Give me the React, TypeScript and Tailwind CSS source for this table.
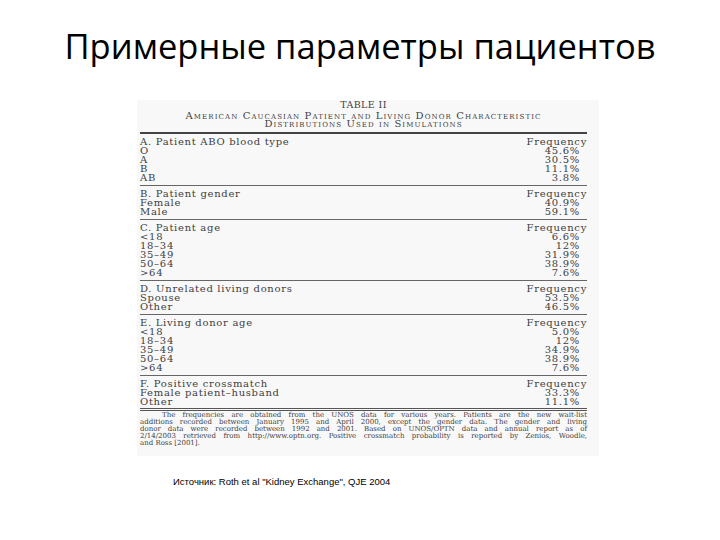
import React from "react";

type Section = {
    title: string;
    rows: [string, string][];
};

const sections: Section[] = [
    { title: "A. Patient ABO blood type", rows: [["O", "45.6%"], ["A", "30.5%"], ["B", "11.1%"], ["AB", "3.8%"]] },
    { title: "B. Patient gender", rows: [["Female", "40.9%"], ["Male", "59.1%"]] },
    { title: "C. Patient age", rows: [["<18", "6.6%"], ["18–34", "12%"], ["35–49", "31.9%"], ["50–64", "38.9%"], [">64", "7.6%"]] },
    { title: "D. Unrelated living donors", rows: [["Spouse", "53.5%"], ["Other", "46.5%"]] },
    { title: "E. Living donor age", rows: [["<18", "5.0%"], ["18–34", "12%"], ["35–49", "34.9%"], ["50–64", "38.9%"], [">64", "7.6%"]] },
    { title: "F. Positive crossmatch", rows: [["Female patient–husband", "33.3%"], ["Other", "11.1%"]] },
];

const footnote = [
    "The frequencies are obtained from the UNOS data for various years. Patients are the new wait-list",
    "additions recorded between January 1995 and April 2000, except the gender data. The gender and living",
    "donor data were recorded between 1992 and 2001. Based on UNOS/OPTN data and annual report as of",
    "2/14/2003 retrieved from http://www.optn.org. Positive crossmatch probability is reported by Zenios, Woodle,",
];

const SectionBlock: React.FC<{ section: Section; last: boolean }> = ({ section, last }) => (
    <div className={`pt-[3px] ${last ? "pb-[2px] border-b-[3px] border-double border-[#555]" : "pb-[3px] border-b border-[#666]"}`}>
        <div className="flex justify-between h-[9px] leading-[9px]">
            <span>{section.title}</span>
            <span>Frequency</span>
        </div>
        {section.rows.map(([label, value], i) => (
            <div key={i} className="flex justify-between h-[9px] leading-[9px]">
                <span>{label}</span>
                <span className="pr-[7px]">{value}</span>
            </div>
        ))}
    </div>
);

export default function App() {
    return (
        <div className="w-[720px] h-[540px] bg-white overflow-hidden">
            <h1 className="pt-[24px] text-center text-[34.5px] leading-[44px] text-black" style={{ fontFamily: "'Open Sans', 'Noto Sans', sans-serif" }}>
                Примерные параметры пациентов
            </h1>
            <div className="ml-[137px] mt-[32px] w-[462px] h-[356px] bg-[#f8f8f8] px-[3px]" style={{ fontFamily: "'DejaVu Serif', 'Liberation Serif', serif" }}>
                <div className="w-[447px] text-[#404040]">
                    <div className="text-center text-[9.5px] leading-[9px] tracking-[0.4px]">TABLE II</div>
                    <div className="mt-[3px] text-center text-[10px] leading-[8px] tracking-[1.1px] [font-variant:small-caps]">
                        American Caucasian Patient and Living Donor Characteristic
                    </div>
                    <div className="text-center text-[10px] leading-[8px] tracking-[1.1px] [font-variant:small-caps]">
                        Distributions Used in Simulations
                    </div>
                    <div className="mt-[4px] border-t-2 border-[#444] text-[10px] leading-[9px] tracking-[0.7px]">
                        {sections.map((s, i) => (
                            <SectionBlock key={i} section={s} last={i === sections.length - 1} />
                        ))}
                    </div>
                    <div className="mt-[1px] text-[7px] leading-[7px]">
                        {footnote.map((line, i) => (
                            <div key={i} className={`[text-align-last:justify] text-justify ${i === 0 ? "pl-[22px]" : ""}`}>{line}</div>
                        ))}
                        <div>and Ross [2001].</div>
                    </div>
                </div>
            </div>
            <div className="ml-[173px] mt-[19px] text-[9.5px] text-black" style={{ fontFamily: "'Liberation Sans', Arial, sans-serif" }}>
                Источник: Roth et al "Kidney Exchange", QJE 2004
            </div>
        </div>
    );
}
